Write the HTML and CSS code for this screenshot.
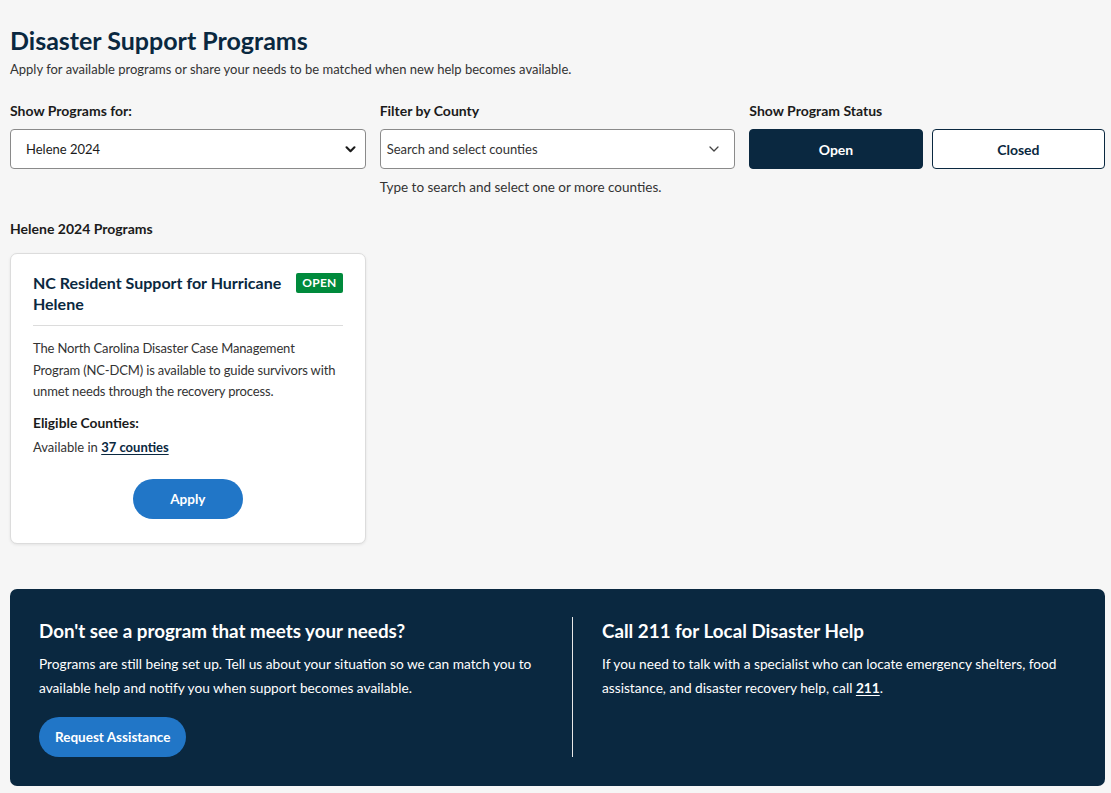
FILE: index.html
```html
<!DOCTYPE html>
<html lang="en">
<head>
    <meta charset="UTF-8">
    <meta name="viewport" content="width=device-width, initial-scale=1.0">
    <title>Disaster Support Programs</title>
    <link rel="stylesheet" href="styles.css">
</head>
<body>
    <main class="page">
        <h1>Disaster Support Programs</h1>
        <p class="subtitle">Apply for available programs or share your needs to be matched when new help becomes available.</p>

        <div class="filters">
            <div class="filter">
                <label class="filter-label">Show Programs for:</label>
                <div class="select-box">
                    <span>Helene 2024</span>
                    <svg width="11" height="7" viewBox="0 0 12 8"><path d="M1.5 1.5 6 6l4.5-4.5" fill="none" stroke="#1b1b1b" stroke-width="2.4" stroke-linecap="round" stroke-linejoin="round"/></svg>
                </div>
            </div>
            <div class="filter">
                <label class="filter-label">Filter by County</label>
                <div class="select-box county">
                    <span>Search and select counties</span>
                    <svg width="10" height="6" viewBox="0 0 10 6"><path d="M1 1l4 4 4-4" fill="none" stroke="#444" stroke-width="1.3" stroke-linecap="round" stroke-linejoin="round"/></svg>
                </div>
                <p class="hint">Type to search and select one or more counties.</p>
            </div>
            <div class="filter">
                <label class="filter-label">Show Program Status</label>
                <div class="status-toggle">
                    <button class="toggle active">Open</button>
                    <button class="toggle">Closed</button>
                </div>
            </div>
        </div>

        <h2 class="section-title">Helene 2024 Programs</h2>

        <div class="programs">
            <div class="card">
                <div class="card-head">
                    <h3>NC Resident Support for Hurricane Helene</h3>
                    <span class="badge">OPEN</span>
                </div>
                <p class="card-text">The North Carolina Disaster Case Management Program (NC-DCM) is available to guide survivors with unmet needs through the recovery process.</p>
                <p class="eligible">Eligible Counties:</p>
                <p class="available">Available in <a href="#">37 counties</a></p>
                <div class="card-actions">
                    <button class="pill">Apply</button>
                </div>
            </div>
        </div>

        <section class="help">
            <div class="help-col">
                <h2>Don't see a program that meets your needs?</h2>
                <p>Programs are still being set up. Tell us about your situation so we can match you to available help and notify you when support becomes available.</p>
                <button class="pill">Request Assistance</button>
            </div>
            <div class="help-col divided">
                <h2>Call 211 for Local Disaster Help</h2>
                <p>If you need to talk with a specialist who can locate emergency shelters, food assistance, and disaster recovery help, call <a href="#">211</a>.</p>
            </div>
        </section>
    </main>
</body>
</html>
```

FILE: styles.css
```css
body {
    margin: 0;
    background: #f6f6f6;
    font-family: Lato, "Noto Sans", sans-serif;
    color: #1b1b1b;
}
.page {
    padding: 24px 6px 8px 10px;
}
h1 {
    margin: 0;
    font-size: 25px;
    line-height: 32px;
    color: #0a2840;
}
.subtitle {
    margin: 3px 0 0;
    font-size: 13px;
    line-height: 20px;
    color: #333;
}
.filters {
    display: grid;
    grid-template-columns: repeat(3, 1fr);
    gap: 14px;
    margin-top: 22px;
}
.filter-label {
    display: block;
    font-size: 14px;
    font-weight: 700;
    line-height: 20px;
    color: #1b1b1b;
    margin-bottom: 8px;
}
.select-box {
    height: 40px;
    box-sizing: border-box;
    background: white;
    border: 1px solid #8a8a8a;
    border-radius: 4px;
    display: flex;
    align-items: center;
    justify-content: space-between;
    padding: 0 9px 0 15px;
    font-size: 13px;
    color: #1b1b1b;
}
.select-box.county {
    padding: 0 15px 0 6px;
    color: #333;
}
.hint {
    margin: 9px 0 0;
    font-size: 13.5px;
    line-height: 18px;
    color: #333;
}
.status-toggle {
    display: flex;
    gap: 9px;
}
.toggle {
    flex: 1;
    height: 40px;
    border: 1px solid #0a2840;
    border-radius: 4px;
    background: white;
    font-family: inherit;
    font-size: 14px;
    font-weight: 700;
    color: #0a2840;
}
.toggle.active {
    background: #0a2840;
    color: white;
}
.section-title {
    margin: 24px 0 0;
    font-size: 14px;
    line-height: 18px;
    color: #1b1b1b;
}
.programs {
    display: grid;
    grid-template-columns: repeat(3, 1fr);
    gap: 14px;
    margin-top: 15px;
}
.card {
    background: white;
    border: 1px solid #dcdcdc;
    border-radius: 7px;
    box-shadow: 0 1px 3px rgba(0,0,0,0.08);
    padding: 18px 22px 24px;
}
.card-head {
    display: flex;
    justify-content: space-between;
    align-items: flex-start;
    gap: 12px;
    padding-bottom: 11px;
    border-bottom: 1px solid #dcdcdc;
}
.card-head h3 {
    margin: 0;
    font-size: 16px;
    line-height: 21px;
    color: #0a2840;
}
.badge {
    background: #008a3c;
    color: white;
    font-size: 12px;
    font-weight: 700;
    line-height: 16px;
    padding: 2px 6px;
    border-radius: 2px;
    margin-top: 1px;
    letter-spacing: 0.3px;
}
.card-text {
    margin: 12px 0 0;
    font-size: 13px;
    line-height: 21.5px;
    letter-spacing: -0.15px;
    color: #333;
}
.eligible {
    margin: 10px 0 0;
    font-size: 13.8px;
    line-height: 20px;
    font-weight: 700;
    color: #1b1b1b;
}
.available {
    margin: 4px 0 0;
    font-size: 13px;
    line-height: 20px;
    color: #333;
}
.available a {
    color: #0a2840;
    font-weight: 700;
    text-underline-offset: 2px;
}
.card-actions {
    text-align: center;
    margin-top: 22px;
}
.pill {
    height: 40px;
    border: none;
    border-radius: 20px;
    background: #2176c7;
    color: white;
    font-family: inherit;
    font-size: 13.5px;
    font-weight: 700;
    padding: 0 16px;
}
.card-actions .pill {
    width: 110px;
}
.help {
    margin-top: 45px;
    background: #0a2840;
    border-radius: 7px;
    padding: 28px 29px 29px;
    display: grid;
    grid-template-columns: 1fr 1fr;
    gap: 29px;
    color: white;
}
.help-col.divided {
    border-left: 1px solid #e8e8e8;
    padding-left: 29px;
}
.help h2 {
    margin: 2px 0 0;
    font-size: 18.8px;
    line-height: 24px;
}
.help p {
    margin: 9px 0 0;
    font-size: 13.7px;
    line-height: 24px;
}
.help p a {
    color: white;
    font-weight: 700;
    text-underline-offset: 2px;
}
.help .pill {
    margin-top: 17px;
}
```
